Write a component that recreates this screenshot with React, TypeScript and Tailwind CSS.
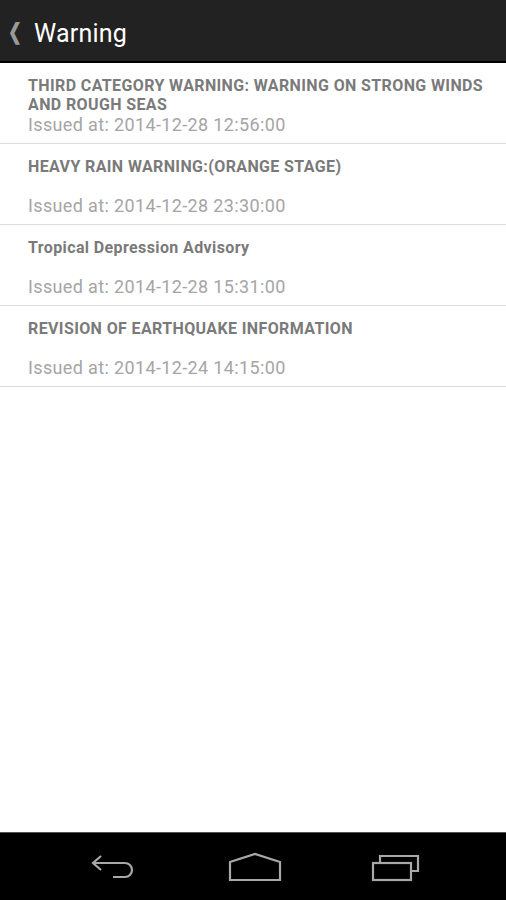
const WARNINGS = [
  { title: 'THIRD CATEGORY WARNING: WARNING ON STRONG WINDS AND ROUGH SEAS', issued: '2014-12-28 12:56:00' },
  { title: 'HEAVY RAIN WARNING:(ORANGE STAGE)', issued: '2014-12-28 23:30:00' },
  { title: 'Tropical Depression Advisory', issued: '2014-12-28 15:31:00' },
  { title: 'REVISION OF EARTHQUAKE INFORMATION', issued: '2014-12-24 14:15:00' },
];

export default function App() {
  return (
    <div className="w-[506px] h-[900px] flex flex-col bg-white font-['Roboto',_sans-serif]">
      <div className="h-[63px] bg-[#222222] border-b-2 border-black flex items-center shrink-0 pt-[2px]">
        <span className="ml-[6px] text-[#9a9a9a] text-[22px] leading-none scale-x-75 font-bold">❮</span>
        <span className="ml-[10px] mt-[3px] text-white text-[25px] leading-none tracking-[0.2px]">Warning</span>
      </div>

      <div className="flex-1">
        {WARNINGS.map((w) => (
          <div key={w.issued} className="min-h-[81px] pl-[28px] pr-[20px] pt-[13px] pb-[8px] border-b border-[#dcdcdc] flex flex-col justify-between">
            <div className="text-[16px] leading-[19px] font-bold tracking-[0.38px] text-[#7a7a7a]">{w.title}</div>
            <div className="text-[18px] leading-[20px] tracking-[0.36px] text-[#a5a5a5]">Issued at: {w.issued}</div>
          </div>
        ))}
      </div>

      <div className="h-[68px] bg-black border-t border-[#555] shrink-0 flex items-center justify-around px-[40px]">
        <svg width="50" height="30" viewBox="0 0 50 30" fill="none" stroke="#a8a8a8" strokeWidth="2.2" className="ml-[4px]">
          <path d="M12 4 L4 11 L12 18" />
          <path d="M4 11 H36 A7 7 0 0 1 36 25 H24" />
        </svg>
        <svg width="54" height="30" viewBox="0 0 54 30" fill="none" stroke="#a8a8a8" strokeWidth="2.2">
          <path d="M2 28 V10 L27 2 L52 10 V28 Z" />
        </svg>
        <svg width="50" height="30" viewBox="0 0 50 30" fill="none" stroke="#a8a8a8" strokeWidth="2.2">
          <rect x="2" y="11" width="38" height="17" />
          <path d="M9 11 V4 H47 V19 H40" />
        </svg>
      </div>
    </div>
  );
}
